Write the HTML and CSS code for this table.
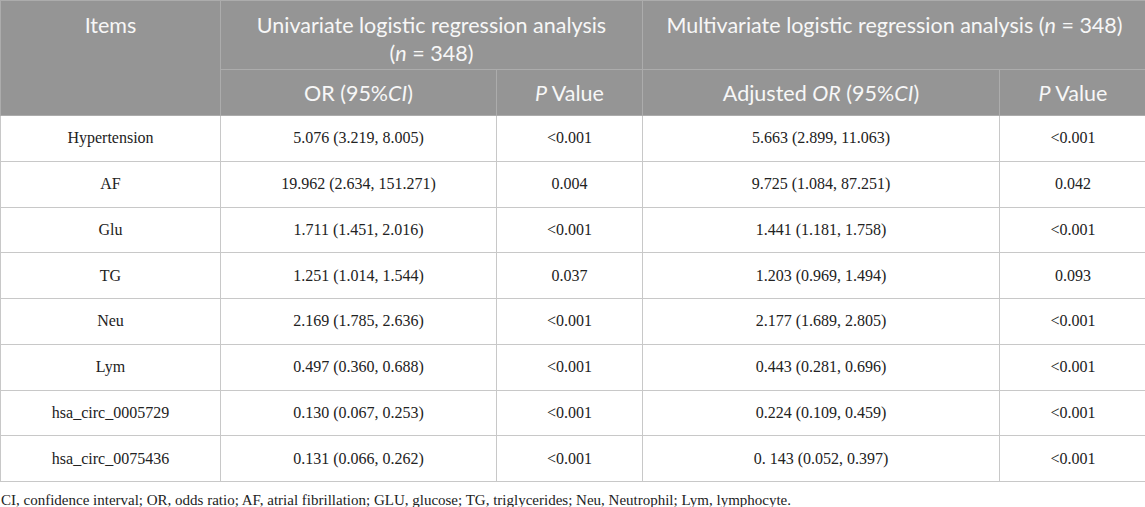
FILE: index.html
```html
<!DOCTYPE html>
<html lang="en">
<head>
<meta charset="utf-8">
<title>Logistic regression table</title>
<link rel="stylesheet" href="styles.css">
</head>
<body>
<div class="wrap">
<table class="tbl">
  <colgroup>
    <col class="c1"><col class="c2"><col class="c3"><col class="c4"><col class="c5">
  </colgroup>
  <thead>
    <tr class="h1">
      <th rowspan="2" class="top">Items</th>
      <th colspan="2" class="top">Univariate logistic regression analysis <span class="nw">(<i>n</i> = 348)</span></th>
      <th colspan="2" class="top">Multivariate logistic regression analysis <span class="nw">(<i>n</i> = 348)</span></th>
    </tr>
    <tr class="h2">
      <th>OR (95%<i>CI</i>)</th>
      <th><i>P</i> Value</th>
      <th>Adjusted <i>OR</i> (95%<i>CI</i>)</th>
      <th><i>P</i> Value</th>
    </tr>
  </thead>
  <tbody>
    <tr><td>Hypertension</td><td>5.076 (3.219, 8.005)</td><td>&lt;0.001</td><td>5.663 (2.899, 11.063)</td><td>&lt;0.001</td></tr>
    <tr><td>AF</td><td>19.962 (2.634, 151.271)</td><td>0.004</td><td>9.725 (1.084, 87.251)</td><td>0.042</td></tr>
    <tr><td>Glu</td><td>1.711 (1.451, 2.016)</td><td>&lt;0.001</td><td>1.441 (1.181, 1.758)</td><td>&lt;0.001</td></tr>
    <tr><td>TG</td><td>1.251 (1.014, 1.544)</td><td>0.037</td><td>1.203 (0.969, 1.494)</td><td>0.093</td></tr>
    <tr><td>Neu</td><td>2.169 (1.785, 2.636)</td><td>&lt;0.001</td><td>2.177 (1.689, 2.805)</td><td>&lt;0.001</td></tr>
    <tr><td>Lym</td><td>0.497 (0.360, 0.688)</td><td>&lt;0.001</td><td>0.443 (0.281, 0.696)</td><td>&lt;0.001</td></tr>
    <tr><td>hsa_circ_0005729</td><td>0.130 (0.067, 0.253)</td><td>&lt;0.001</td><td>0.224 (0.109, 0.459)</td><td>&lt;0.001</td></tr>
    <tr><td>hsa_circ_0075436</td><td>0.131 (0.066, 0.262)</td><td>&lt;0.001</td><td>0. 143 (0.052, 0.397)</td><td>&lt;0.001</td></tr>
  </tbody>
</table>
<p class="note">CI, confidence interval; OR, odds ratio; AF, atrial fibrillation; GLU, glucose; TG, triglycerides; Neu, Neutrophil; Lym, lymphocyte.</p>
</div>
</body>
</html>
```
FILE: styles.css
```css
html, body {
  margin: 0;
  padding: 0;
  background: #ffffff;
}
.wrap {
  width: 1145px;
}
.tbl {
  width: 1146px;
  table-layout: fixed;
  border-collapse: collapse;
}
.c1 { width: 220px; }
.c2 { width: 276px; }
.c3 { width: 146px; }
.c4 { width: 357px; }
.c5 { width: 147px; }
.tbl th {
  background: #959595;
  color: #f7f7f7;
  font-family: Lato, "Open Sans", sans-serif;
  font-weight: 400;
  font-size: 21.5px;
  line-height: 28px;
  text-align: center;
  border: 1px solid #acacac;
  padding: 0 14px;
}
.tbl th i {
  font-style: italic;
}
.nw {
  white-space: nowrap;
}
.tbl th.top {
  vertical-align: top;
  padding-top: 10px;
}
.h1 { height: 69px; }
.h2 { height: 46px; }
.tbl td {
  font-family: "Liberation Serif", "Times New Roman", serif;
  font-size: 16px;
  color: #222222;
  text-align: center;
  border: 1px solid #c8c8c8;
  height: 44.75px;
  padding: 0 8px;
}
.note {
  margin: 10px 0 0 1px;
  font-family: "Liberation Serif", "Times New Roman", serif;
  font-size: 15px;
  color: #222222;
}
```
